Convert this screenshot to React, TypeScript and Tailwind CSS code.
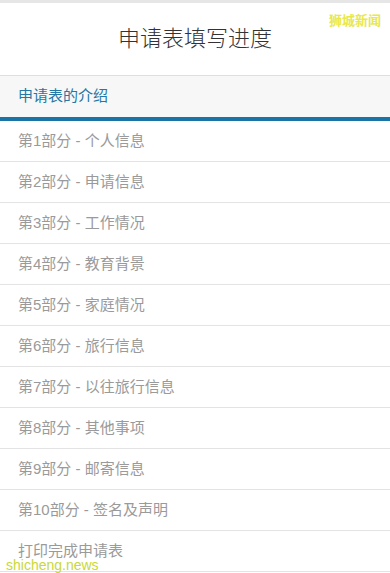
const parts = [
  "第1部分 - 个人信息",
  "第2部分 - 申请信息",
  "第3部分 - 工作情况",
  "第4部分 - 教育背景",
  "第5部分 - 家庭情况",
  "第6部分 - 旅行信息",
  "第7部分 - 以往旅行信息",
  "第8部分 - 其他事项",
  "第9部分 - 邮寄信息",
  "第10部分 - 签名及声明",
  "打印完成申请表",
];

export default function App() {
  return (
    <div
      className="relative h-[573px] w-[390px] overflow-hidden bg-white"
      style={{ fontFamily: '"Liberation Sans", "Noto Sans CJK SC", sans-serif' }}
    >
      <div className="h-[3px] bg-[#e6e6e6]" />
      <div className="flex h-[73px] items-center justify-center border-b border-[#dedede] pb-[2px]">
        <h1 className="text-[22px] font-light text-[#333]">申请表填写进度</h1>
      </div>
      <div className="flex h-[41px] items-center bg-[#f7f7f7] px-[18px] text-[15px] text-[#2378a5]">
        申请表的介绍
      </div>
      <div className="h-[4px] bg-[#1a75a6]" />
      <ul>
        {parts.map((p) => (
          <li
            key={p}
            className="flex h-[41px] items-center border-b border-[#e3e3e3] px-[18px] text-[15px] text-[#9a9a9a]"
          >
            {p}
          </li>
        ))}
      </ul>
      {/* watermarks */}
      <span className="absolute right-[9px] top-[11px] text-[13px] font-bold text-[#e8e84a]">
        狮城新闻
      </span>
      <span className="absolute bottom-[1px] left-[6px] text-[14px] leading-none text-[#c8d83a]">
        shicheng.news
      </span>
    </div>
  );
}
